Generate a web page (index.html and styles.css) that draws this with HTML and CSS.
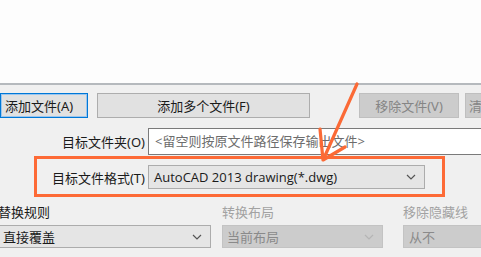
FILE: index.html
```html
<!DOCTYPE html>
<html lang="zh-CN">
<head>
  <meta charset="utf-8" />
  <title>批量转换</title>
  <link rel="stylesheet" href="styles.css">
</head>
<body>
  <!-- 上方空白区 -->
  <div class="top-area"></div>

  <!-- 对话框面板 -->
  <main class="panel">
    <div class="btn-row">
      <button class="btn btn-focus btn-add">添加文件(A)</button>
      <button class="btn btn-multi">添加多个文件(F)</button>
      <button class="btn btn-disabled btn-remove">移除文件(V)</button>
      <button class="btn btn-disabled btn-clear">清除列表</button>
    </div>

    <div class="form-row">
      <label class="form-label">目标文件夹(O)</label>
      <div class="text-input">&lt;留空则按原文件路径保存输出文件&gt;</div>
    </div>

    <div class="form-row format-row">
      <label class="form-label">目标文件格式(T)</label>
      <div class="select select-format">
        <span>AutoCAD 2013 drawing(*.dwg)</span>
        <svg class="chevron" width="10" height="6" viewBox="0 0 10 6"><path d="M1 1 L5 5 L9 1" fill="none" stroke="#555" stroke-width="1.2"/></svg>
      </div>
      <span class="mark"></span>
    </div>

    <div class="opt-row">
      <div class="opt opt-rule">
        <div class="opt-label">替换规则</div>
        <div class="select">
          <span>直接覆盖</span>
          <svg class="chevron" width="10" height="6" viewBox="0 0 10 6"><path d="M1 1 L5 5 L9 1" fill="none" stroke="#555" stroke-width="1.2"/></svg>
        </div>
      </div>
      <div class="opt opt-layout disabled">
        <div class="opt-label">转换布局</div>
        <div class="select">
          <span>当前布局</span>
          <svg class="chevron" width="10" height="6" viewBox="0 0 10 6"><path d="M1 1 L5 5 L9 1" fill="none" stroke="#b5b5b5" stroke-width="1.2"/></svg>
        </div>
      </div>
      <div class="opt opt-hidden disabled">
        <div class="opt-label">移除隐藏线</div>
        <div class="select">
          <span>从不</span>
        </div>
      </div>
    </div>
  </main>

  <!-- 标注箭头 -->
  <svg class="arrow" width="481" height="257" viewBox="0 0 481 257">
    <path d="M357 84 L324 158" fill="none" stroke="#fb6a36" stroke-width="3.2" stroke-linecap="round"/>
    <path d="M320 129 L323 160 L345 147" fill="none" stroke="#fb6a36" stroke-width="3.2" stroke-linecap="round" stroke-linejoin="round"/>
  </svg>
</body>
</html>
```

FILE: styles.css
```css
* {
  margin: 0;
  padding: 0;
  box-sizing: border-box;
}

html {
  overflow: hidden;
}

body {
  width: 481px;
  height: 257px;
  overflow: hidden;
  position: relative;
  background-color: #f0f0f0;
  font-family: "Noto Sans", "Noto Sans CJK SC", sans-serif;
  font-size: 13px;
  color: #1a1a1a;
}

/* 上方空白 */
.top-area {
  height: 85px;
  background-color: #fdfdfd;
  border-bottom: 2px solid #b5b9bd;
}

.panel {
  padding-top: 8px;
}

/* 按钮行 */
.btn-row {
  display: flex;
  height: 25px;
}
.btn {
  flex-shrink: 0;
  font: inherit;
  height: 25px;
  background-color: #e1e1e1;
  border: 1px solid #adadad;
  color: #1a1a1a;
  white-space: nowrap;
  overflow: hidden;
}
.btn-focus {
  border-color: #0078d7;
  box-shadow: inset 0 0 0 1px #9cc6ee;
}
.btn-add {
  width: 88px;
  text-align: left;
  padding-left: 4px;
}
.btn-multi {
  width: 213px;
  margin-left: 9px;
}
.btn-remove {
  width: 100px;
  margin-left: 49px;
}
.btn-clear {
  width: 100px;
  margin-left: 6px;
  text-align: left;
  padding-left: 3px;
}
.btn-disabled {
  background-color: #cccccc;
  border-color: #bfbfbf;
  color: #858585;
}

/* 表单行 */
.form-row {
  display: flex;
  align-items: center;
  margin-top: 10px;
  position: relative;
}
.form-label {
  flex-shrink: 0;
  width: 145px;
  text-align: right;
  white-space: nowrap;
}
.text-input {
  flex-shrink: 0;
  margin-left: 3px;
  width: 340px;
  height: 27px;
  background-color: #fff;
  border: 1px solid #7a7a7a;
  color: #6d6d6d;
  padding-left: 6px;
  line-height: 25px;
  white-space: nowrap;
}

.format-row {
  margin-top: 10px;
}
.select {
  display: flex;
  align-items: center;
  justify-content: space-between;
  height: 23px;
  background-color: #e5e5e5;
  border: 1px solid #acacac;
  padding: 0 8px 0 4px;
  white-space: nowrap;
}
.select-format {
  flex-shrink: 0;
  margin-left: 3px;
  width: 277px;
  height: 24px;
  font-family: "Open Sans", "Noto Sans CJK SC", sans-serif;
  padding-left: 5px;
}
.mark {
  position: absolute;
  left: 34px;
  top: -9px;
  width: 411px;
  height: 41px;
  border: 3px solid #fd6a36;
}

/* 选项行 */
.opt-row {
  display: flex;
  margin-top: 13px;
}
.opt {
  flex-shrink: 0;
}
.opt-label {
  height: 20px;
  line-height: 20px;
  margin-bottom: 3px;
  white-space: nowrap;
}
.opt-rule {
  width: 213px;
  margin-left: -2px;
}
.opt-layout {
  width: 161px;
  margin-left: 11px;
}
.opt-hidden {
  width: 100px;
  margin-left: 20px;
}
.disabled .opt-label {
  color: #a2a2a2;
}
.disabled .select {
  background-color: #cccccc;
  border-color: #c3c3c3;
  color: #8a8a8a;
}
.opt-hidden .select {
  padding-left: 5px;
}

/* 标注箭头 */
.arrow {
  position: absolute;
  left: 0;
  top: 0;
  pointer-events: none;
}
```
